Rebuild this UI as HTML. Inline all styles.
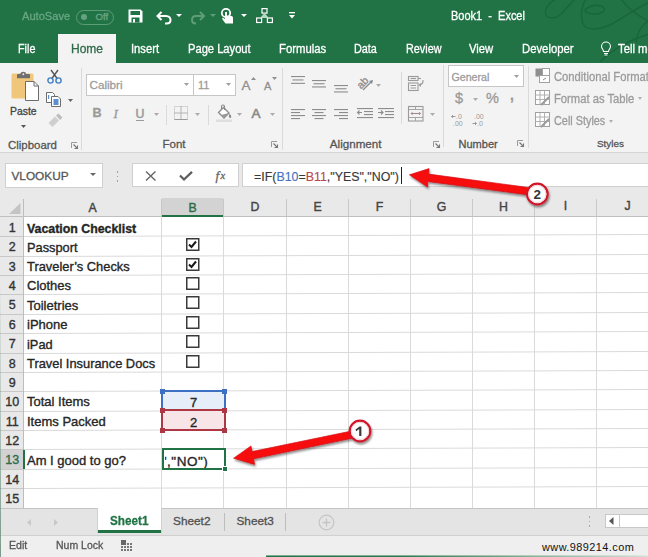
<!DOCTYPE html><html><head><meta charset='utf-8'><style>
*{margin:0;padding:0;box-sizing:border-box}
html,body{width:648px;height:557px;overflow:hidden;background:#fff;position:relative;font-family:"Liberation Sans",sans-serif}
.a{position:absolute}
.t{position:absolute;white-space:pre;line-height:1;-webkit-text-stroke-width:0.3px}
svg{position:absolute;overflow:visible}
</style></head><body>
<div class="a" style="left:0px;top:0px;width:648px;height:63px;background:#217346"></div>
<svg style="left:0;top:0" width="648" height="63"><g fill="none" stroke="#19663b" stroke-width="1.5">
<path d="M556 -1 C548 3 544 10 546 15 C548 19 556 19 561 14 C566 9 570 4 576 -2"/>
<path d="M586 -2 C582 6 580 16 583 24 C587 31 600 30 612 24 C625 17 636 8 650 2"/>
<path d="M585 10 C590 5 598 4 603 7 C607 10 602 14 595 14 C589 14 585 12 585 10 Z"/>
<path d="M620 -2 C626 6 634 14 650 22"/>
<path d="M636 42 C637 32 641 25 650 20"/>
<path d="M600 62 C612 50 628 40 650 34"/>
</g></svg>
<div class="t" style="left:21.5px;top:11.02px;font-size:11.8px;transform:scaleX(0.941);transform-origin:0 0;color:#6aa684">AutoSave</div>
<div class="a" style="left:76px;top:9.5px;width:37.5px;height:15px;border:1.7px solid #5d9c78;border-radius:7.5px"></div>
<div class="a" style="left:81.3px;top:14.2px;width:6px;height:6px;background:#66a281;border-radius:50%"></div>
<div class="t" style="left:95.5px;top:12.31px;font-size:9.6px;color:#6aa684">Off</div>
<svg style="left:128px;top:9px" width="16" height="15"><path d="M0.5 0.5 H12.5 L14.5 2.5 V13.5 H0.5 Z" fill="#fff"/><rect x="2.5" y="2" width="9.5" height="4" fill="#217346"/><rect x="3.5" y="8.5" width="8" height="5" fill="#217346"/><rect x="5" y="10" width="2" height="3.5" fill="#fff"/></svg>
<svg style="left:156px;top:9px" width="18" height="16"><path d="M5.5 3 L1.5 7 L5.5 11" fill="none" stroke="#fff" stroke-width="2"/><path d="M2 7 H10 C13 7 14.5 9 14.5 11 C14.5 13 13 14.5 10.5 14.5 H9" fill="none" stroke="#fff" stroke-width="2"/></svg>
<svg style="left:176px;top:14px" width="7" height="4"><path d="M0 0 H6 L3 3 Z" fill="#fff"/></svg>
<svg style="left:191px;top:9px" width="18" height="16"><path d="M9 3 L13 7 L9 11" fill="none" stroke="#5d9e79" stroke-width="2"/><path d="M12.5 7 H5 C2 7 1 9 1 11 C1 13 2.5 14.5 5 14.5" fill="none" stroke="#5d9e79" stroke-width="2"/></svg>
<svg style="left:210px;top:14px" width="7" height="4"><path d="M0 0 H6 L3 3 Z" fill="#5d9e79"/></svg>
<svg style="left:221px;top:8px" width="14" height="17"><circle cx="5" cy="5" r="4.2" fill="none" stroke="#fff" stroke-width="1.8"/><path d="M4 4 V11 L2.5 10 C1.5 9.5 0.8 10.5 1.5 11.5 L4.5 15.5 H12 V10 C12 8.5 11 8 9 7.8 L6 7.5 V4 Z" fill="#fff"/></svg>
<svg style="left:241px;top:14px" width="7" height="4"><path d="M0 0 H6 L3 3 Z" fill="#fff"/></svg>
<svg style="left:256px;top:8px" width="18" height="16"><g fill="none" stroke="#fff" stroke-width="1.2"><rect x="6" y="0.6" width="5" height="4.5"/><rect x="0.6" y="10" width="5" height="4.5"/><rect x="11.4" y="10" width="5" height="4.5"/></g><path d="M8.5 5 L4 10 H13 Z" fill="#b8d8c4"/></svg>
<svg style="left:289px;top:12px" width="7" height="8"><rect x="0" y="0" width="6" height="1.3" fill="#fff"/><path d="M0 3 H6 L3 6.5 Z" fill="#fff"/></svg>
<div class="t" style="left:451px;top:9.76px;font-size:12.2px;transform:scaleX(0.902);transform-origin:0 0;color:#fff">Book1  -  Excel</div>
<div class="a" style="left:58px;top:34px;width:58px;height:30px;background:#f3f3f3"></div>
<div class="t" style="left:18px;top:43px;font-size:12.3px;color:#fff;transform:scaleX(0.878);transform-origin:0 0">File</div>
<div class="t" style="left:71px;top:43px;font-size:12.3px;color:#2e6b4a;transform:scaleX(0.976);transform-origin:0 0">Home</div>
<div class="t" style="left:131px;top:43px;font-size:12.3px;color:#fff;transform:scaleX(0.911);transform-origin:0 0">Insert</div>
<div class="t" style="left:187.5px;top:43px;font-size:12.3px;color:#fff;transform:scaleX(0.907);transform-origin:0 0">Page Layout</div>
<div class="t" style="left:278.5px;top:43px;font-size:12.3px;color:#fff;transform:scaleX(0.921);transform-origin:0 0">Formulas</div>
<div class="t" style="left:354px;top:43px;font-size:12.3px;color:#fff;transform:scaleX(0.881);transform-origin:0 0">Data</div>
<div class="t" style="left:405.5px;top:43px;font-size:12.3px;color:#fff;transform:scaleX(0.880);transform-origin:0 0">Review</div>
<div class="t" style="left:469px;top:43px;font-size:12.3px;color:#fff;transform:scaleX(0.915);transform-origin:0 0">View</div>
<div class="t" style="left:522px;top:43px;font-size:12.3px;color:#fff;transform:scaleX(0.919);transform-origin:0 0">Developer</div>
<div class="t" style="left:618px;top:43px;font-size:12.3px;color:#fff;transform:scaleX(0.919);transform-origin:0 0">Tell me</div>
<svg style="left:600px;top:42px" width="12" height="14"><path d="M3.5 9.5 C3.5 7.5 1.5 6.5 1.5 4.5 A4.5 4.5 0 0 1 10.5 4.5 C10.5 6.5 8.5 7.5 8.5 9.5 Z" fill="none" stroke="#fff" stroke-width="1.1"/><path d="M4 11.5 H8 M4.5 13 H7.5" stroke="#fff" stroke-width="1.1"/></svg>
<div class="a" style="left:0px;top:63px;width:648px;height:90px;background:#f3f3f3"></div>
<div class="a" style="left:0px;top:152px;width:648px;height:1px;background:#d5d5d5"></div>
<div class="a" style="left:81px;top:68px;width:1px;height:82px;background:#dadada"></div>
<div class="a" style="left:282px;top:68px;width:1px;height:82px;background:#dadada"></div>
<div class="a" style="left:443px;top:65px;width:1px;height:82px;background:#dadada"></div>
<div class="a" style="left:528px;top:66px;width:1px;height:82px;background:#dadada"></div>
<svg style="left:10px;top:70px" width="32" height="32">
<rect x="1.5" y="3.5" width="22" height="25" rx="1.5" fill="#f0c77a"/>
<path d="M7 5 Q7 4 8 4 H19 Q20 4 20 5 V8.3 H7 Z" fill="#6f6f6f"/><path d="M10.5 5 V3.5 Q10.5 1.8 13.3 1.8 Q16 1.8 16 3.5 V5 Z" fill="#6f6f6f"/><circle cx="13.3" cy="4.2" r="1" fill="#e9e9e9"/>
<path d="M15.5 11.5 H24 L28.5 16 V30.5 H15.5 Z" fill="#fff" stroke="#6d6d6d" stroke-width="1"/>
<path d="M24 11.5 V16 H28.5" fill="none" stroke="#6d6d6d" stroke-width="1"/>
</svg>
<div class="t" style="left:10px;top:106.89px;font-size:10.4px;color:#444">Paste</div>
<svg style="left:21px;top:125px" width="5" height="3"><path d="M0 0 H5 L2.5 3 Z" fill="#555"/></svg>
<svg style="left:47px;top:69px" width="15" height="15"><path d="M4 1 L10.5 10 M11 1 L4.5 10" stroke="#505050" stroke-width="1.3" fill="none"/><circle cx="3.5" cy="11.5" r="2.6" fill="none" stroke="#3f7fc6" stroke-width="1.4"/><circle cx="11.5" cy="11.5" r="2.6" fill="none" stroke="#3f7fc6" stroke-width="1.4"/></svg>
<svg style="left:46px;top:92px" width="16" height="15"><path d="M0.5 0.5 H6.5 L8.5 2.5 V10.5 H0.5 Z" fill="#fff" stroke="#6d6d6d"/><path d="M5.5 4.5 H12 L14.5 7 V14.5 H5.5 Z" fill="#fff" stroke="#6d6d6d"/><rect x="7.5" y="7" width="5" height="6" fill="#5b8fd0"/><rect x="2" y="3" width="1.2" height="4" fill="#5b8fd0"/></svg>
<svg style="left:68px;top:99px" width="5" height="3"><path d="M0 0 H5 L2.5 3 Z" fill="#666"/></svg>
<svg style="left:48px;top:114px" width="15" height="13"><path d="M0.5 9 L7 2.5 L11 6.5 L4.5 13 Z" fill="#cfcfcf"/><path d="M8 1.5 L10.5 -0.5 L14.5 3.5 L12 6 Z" fill="#bdbdbd"/></svg>
<div class="t" style="left:8px;top:139.64px;font-size:11.45px;color:#555">Clipboard</div>
<svg style="left:71px;top:142px" width="7" height="7"><path d="M0.5 6 V0.5 H6" fill="none" stroke="#9a9a9a" stroke-width="1"/><path d="M2.5 2.5 L6.5 6.5 M3.5 6.5 H6.5 V3.5" fill="none" stroke="#777" stroke-width="1.1"/></svg>
<div class="a" style="left:86px;top:74px;width:108px;height:22px;background:#fff;border:1px solid #c6c6c6"></div>
<div class="a" style="left:193px;top:74px;width:43px;height:22px;background:#fff;border:1px solid #c6c6c6"></div>
<div class="t" style="left:89.5px;top:79.43px;font-size:11.68px;color:#9c9c9c">Calibri</div>
<svg style="left:184px;top:83px" width="5" height="3"><path d="M0 0 H5 L2.5 3 Z" fill="#a0a0a0"/></svg>
<div class="t" style="left:198px;top:80.05px;font-size:11px;color:#9c9c9c">11</div>
<svg style="left:226px;top:83px" width="5" height="3"><path d="M0 0 H5 L2.5 3 Z" fill="#a0a0a0"/></svg>
<div class="t" style="left:241.5px;top:78.78px;font-size:13.5px;color:#8f8f8f">A</div>
<svg style="left:251px;top:77px" width="5" height="3"><path d="M0 3 L2.5 0 L5 3 Z" fill="#8f8f8f"/></svg>
<div class="t" style="left:264px;top:81.05px;font-size:11px;color:#8f8f8f">A</div>
<svg style="left:272px;top:77px" width="5" height="3"><path d="M0 0 H5 L2.5 3 Z" fill="#8f8f8f"/></svg>
<div class="t" style="left:92.5px;top:107.40px;font-size:12.6px;color:#9a9a9a;font-weight:bold">B</div>
<div class="t" style="left:113.5px;top:107.03px;font-size:13px;color:#9a9a9a;font-style:italic;font-family:&quot;Liberation Serif&quot;">I</div>
<div class="t" style="left:135.5px;top:107.67px;font-size:12.3px;color:#9a9a9a;-webkit-text-stroke-width:0.5px">U</div>
<div class="a" style="left:135.5px;top:120px;width:8.5px;height:1.2px;background:#9a9a9a"></div>
<svg style="left:153.5px;top:113px" width="5" height="3"><path d="M0 0 H5 L2.5 3 Z" fill="#ababab"/></svg>
<div class="a" style="left:166px;top:105px;width:1px;height:20px;background:#dadada"></div>
<svg style="left:174px;top:106px" width="14" height="14"><rect x="0.5" y="0.5" width="13" height="13" fill="none" stroke="#b3b3b3" stroke-dasharray="1 1"/><path d="M7 0 V14 M0 7 H14" stroke="#b3b3b3"/><path d="M0.5 13.5 H13.5" stroke="#9a9a9a"/></svg>
<svg style="left:194.5px;top:113px" width="5" height="3"><path d="M0 0 H5 L2.5 3 Z" fill="#ababab"/></svg>
<div class="a" style="left:208px;top:105px;width:1px;height:20px;background:#dadada"></div>
<svg style="left:216px;top:105px" width="17" height="17"><path d="M2.5 7.5 L7.5 2.5 L13 8 L8 13 Z" fill="#fff" stroke="#8a8a8a" stroke-width="1.3"/><path d="M13 8 L8 13 L5 10 Z" fill="#9a9a9a"/><path d="M5.5 4.5 V1.5 Q5.5 0 7 0 Q8.5 0 8.5 1.5 V5" fill="none" stroke="#8a8a8a" stroke-width="1.1"/><path d="M13.5 8.5 Q15.8 11 15.2 12.5 Q14 13.5 13 12.3 Q12.7 11 13.5 8.5Z" fill="#8a8a8a"/><rect x="0" y="14.5" width="16" height="2.5" fill="#dedede"/></svg>
<svg style="left:237px;top:113px" width="5" height="3"><path d="M0 0 H5 L2.5 3 Z" fill="#ababab"/></svg>
<div class="t" style="left:251.5px;top:107.28px;font-size:13.5px;color:#8a8a8a;-webkit-text-stroke-width:0.6px">A</div>
<svg style="left:269.5px;top:113px" width="5" height="3"><path d="M0 0 H5 L2.5 3 Z" fill="#ababab"/></svg>
<div class="t" style="left:162.5px;top:138.86px;font-size:11.54px;color:#555">Font</div>
<svg style="left:271px;top:141px" width="7" height="7"><path d="M0.5 6 V0.5 H6" fill="none" stroke="#9a9a9a" stroke-width="1"/><path d="M2.5 2.5 L6.5 6.5 M3.5 6.5 H6.5 V3.5" fill="none" stroke="#777" stroke-width="1.1"/></svg>
<svg style="left:291px;top:76px" width="16" height="16"><rect x="0" y="0.0" width="14" height="1.1" fill="#8d8d8d"/><rect x="1.5" y="3.4" width="11" height="1.1" fill="#8d8d8d"/><rect x="0" y="6.8" width="14" height="1.1" fill="#8d8d8d"/></svg>
<svg style="left:312px;top:80px" width="16" height="16"><rect x="0" y="0.0" width="14" height="1.1" fill="#8d8d8d"/><rect x="1.5" y="3.2" width="11" height="1.1" fill="#8d8d8d"/><rect x="0" y="6.4" width="14" height="1.1" fill="#8d8d8d"/></svg>
<svg style="left:334px;top:85px" width="16" height="16"><rect x="0" y="0.0" width="14" height="1.1" fill="#8d8d8d"/><rect x="1.5" y="3.2" width="11" height="1.1" fill="#8d8d8d"/><rect x="0" y="6.4" width="14" height="1.1" fill="#8d8d8d"/></svg>
<svg style="left:355px;top:74px" width="20" height="18"><text x="1" y="12.5" font-family="Liberation Sans" font-size="10.5" fill="#8a8a8a" stroke="#8a8a8a" stroke-width="0.3" transform="rotate(-45 7 8)">ab</text><path d="M8 16 L17 7" fill="none" stroke="#8a8a8a" stroke-width="1.3"/><path d="M18 6 L14 7 L17 10 Z" fill="#8a8a8a"/></svg>
<svg style="left:376px;top:84px" width="5" height="3"><path d="M0 0 H5 L2.5 3 Z" fill="#ababab"/></svg>
<svg style="left:408px;top:76px" width="17" height="16"><g fill="none" stroke="#9a9a9a" stroke-width="1.1"><rect x="0.5" y="0.5" width="9.5" height="4"/><path d="M2.5 2.5 H8"/><path d="M10 2.5 H13"/><rect x="0.5" y="7" width="9.5" height="7.5"/><path d="M2.5 9.5 H8 M2.5 12 H8"/><path d="M15 4 Q15.5 8 11.5 9"/></g><path d="M10.5 9 L13 7 L13 11 Z" fill="#9a9a9a"/></svg>
<svg style="left:291px;top:108.5px" width="16" height="16"><rect x="0" y="0" width="14" height="1.1" fill="#8d8d8d"/><rect x="0" y="3" width="9" height="1.1" fill="#8d8d8d"/><rect x="0" y="6" width="14" height="1.1" fill="#8d8d8d"/><rect x="0" y="9" width="9" height="1.1" fill="#8d8d8d"/></svg>
<svg style="left:312px;top:108.5px" width="16" height="16"><rect x="0" y="0" width="14" height="1.1" fill="#8d8d8d"/><rect x="2.5" y="3" width="9" height="1.1" fill="#8d8d8d"/><rect x="0" y="6" width="14" height="1.1" fill="#8d8d8d"/><rect x="2.5" y="9" width="9" height="1.1" fill="#8d8d8d"/></svg>
<svg style="left:333.5px;top:108.5px" width="16" height="16"><rect x="0" y="0" width="14" height="1.1" fill="#8d8d8d"/><rect x="5" y="3" width="9" height="1.1" fill="#8d8d8d"/><rect x="0" y="6" width="14" height="1.1" fill="#8d8d8d"/><rect x="5" y="9" width="9" height="1.1" fill="#8d8d8d"/></svg>
<svg style="left:357px;top:108px" width="16" height="12"><g fill="#8d8d8d"><rect x="0" y="0" width="16" height="1.1"/><rect x="7" y="3" width="9" height="1.1"/><rect x="7" y="6" width="9" height="1.1"/><rect x="0" y="9" width="16" height="1.1"/></g><path d="M5 4.5 H0.5 M2.5 2.5 L0.5 4.5 L2.5 6.5" fill="none" stroke="#8d8d8d" stroke-width="1.1"/></svg>
<svg style="left:378px;top:108px" width="16" height="12"><g fill="#8d8d8d"><rect x="0" y="0" width="16" height="1.1"/><rect x="7" y="3" width="9" height="1.1"/><rect x="7" y="6" width="9" height="1.1"/><rect x="0" y="9" width="16" height="1.1"/></g><path d="M0 4.5 H5 M3 2.5 L5 4.5 L3 6.5" fill="none" stroke="#8d8d8d" stroke-width="1.1"/></svg>
<div class="a" style="left:401px;top:72px;width:1px;height:52px;background:#dadada"></div>
<svg style="left:408px;top:106px" width="17" height="16"><rect x="0.5" y="0.5" width="14.5" height="14.5" fill="none" stroke="#9a9a9a" stroke-width="1.1"/><path d="M0.5 3.5 H15 M0.5 11.5 H15 M7.5 0.5 V3.5 M7.5 11.5 V15" fill="none" stroke="#a5a5a5"/><path d="M3 7.5 H12.5" stroke="#a08c8c" stroke-width="1.1"/><path d="M2.5 7.5 L4.5 5.8 V9.2 Z M13 7.5 L11 5.8 V9.2 Z" fill="#a08c8c"/></svg>
<svg style="left:430px;top:113px" width="5" height="3"><path d="M0 0 H5 L2.5 3 Z" fill="#ababab"/></svg>
<div class="t" style="left:329.8px;top:138.27px;font-size:11.63px;color:#555">Alignment</div>
<svg style="left:433px;top:141px" width="7" height="7"><path d="M0.5 6 V0.5 H6" fill="none" stroke="#9a9a9a" stroke-width="1"/><path d="M2.5 2.5 L6.5 6.5 M3.5 6.5 H6.5 V3.5" fill="none" stroke="#777" stroke-width="1.1"/></svg>
<div class="a" style="left:448px;top:65px;width:76px;height:22px;background:#fff;border:1px solid #c6c6c6"></div>
<div class="t" style="left:451.5px;top:72.36px;font-size:10.65px;color:#9c9c9c">General</div>
<svg style="left:514px;top:75px" width="5" height="3"><path d="M0 0 H5 L2.5 3 Z" fill="#a0a0a0"/></svg>
<div class="t" style="left:455px;top:90.88px;font-size:14.5px;color:#9a9a9a">$</div>
<svg style="left:472.5px;top:98px" width="5" height="3"><path d="M0 0 H5 L2.5 3 Z" fill="#ababab"/></svg>
<div class="t" style="left:486px;top:90.88px;font-size:14.5px;color:#9a9a9a">%</div>
<div class="t" style="left:510px;top:88.33px;font-size:14px;color:#9a9a9a;font-weight:bold">,</div>
<svg style="left:451px;top:113px" width="16" height="15"><text x="5" y="6" font-family="Liberation Sans" font-size="7" fill="#9a9a9a">.0</text><text x="2" y="13" font-family="Liberation Sans" font-size="7" fill="#9a9a9a">.00</text><path d="M4.5 3.5 H0.5 M2 2 L0.5 3.5 L2 5" fill="none" stroke="#9a9a9a"/></svg>
<svg style="left:472px;top:113px" width="16" height="15"><text x="2" y="6" font-family="Liberation Sans" font-size="7" fill="#9a9a9a">.00</text><text x="5" y="13" font-family="Liberation Sans" font-size="7" fill="#9a9a9a">.0</text><path d="M0.5 10.5 H4.5 M3 9 L4.5 10.5 L3 12" fill="none" stroke="#9a9a9a"/></svg>
<div class="t" style="left:458.5px;top:138.60px;font-size:11.05px;color:#555">Number</div>
<svg style="left:517px;top:140px" width="7" height="7"><path d="M0.5 6 V0.5 H6" fill="none" stroke="#9a9a9a" stroke-width="1"/><path d="M2.5 2.5 L6.5 6.5 M3.5 6.5 H6.5 V3.5" fill="none" stroke="#777" stroke-width="1.1"/></svg>
<svg style="left:535px;top:68px" width="16" height="16"><rect x="0.5" y="0.5" width="7" height="8" fill="#8f8f8f"/><rect x="7.5" y="0.5" width="7" height="8" fill="#fff" stroke="#a0a0a0"/><rect x="4.5" y="7.5" width="10" height="7" fill="#fff" stroke="#a0a0a0"/><path d="M8 12 L11 10" stroke="#8a8a8a"/></svg>
<svg style="left:535px;top:90px" width="16" height="16"><rect x="0.5" y="0.5" width="14" height="14" fill="#fff" stroke="#a0a0a0"/><path d="M0.5 5 H14.5 M0.5 9.5 H14.5 M5 0.5 V14.5 M9.5 0.5 V14.5" stroke="#b0b0b0"/><path d="M6 15 L14 7" stroke="#9a9a9a" stroke-width="2"/></svg>
<svg style="left:535px;top:112px" width="16" height="16"><rect x="0.5" y="0.5" width="14" height="14" fill="#fff" stroke="#a0a0a0"/><path d="M0.5 5 H14.5 M0.5 9.5 H14.5 M5 0.5 V14.5 M9.5 0.5 V14.5" stroke="#b0b0b0"/><path d="M6 15 L14 7" stroke="#9a9a9a" stroke-width="2"/></svg>
<div class="t" style="left:554.4px;top:70.57px;font-size:12.3px;transform:scaleX(0.913);transform-origin:0 0;color:#9b9b9b">Conditional Formatting</div>
<div class="t" style="left:554.4px;top:92.77px;font-size:12.3px;transform:scaleX(0.913);transform-origin:0 0;color:#9b9b9b">Format as Table</div>
<svg style="left:638px;top:97px" width="4" height="3"><path d="M0 0 H4 L2.0 3 Z" fill="#b0b0b0"/></svg>
<div class="t" style="left:554.4px;top:115.34px;font-size:12.0px;transform:scaleX(0.905);transform-origin:0 0;color:#9b9b9b">Cell Styles</div>
<svg style="left:608.5px;top:119.5px" width="4" height="3"><path d="M0 0 H4 L2.0 3 Z" fill="#b0b0b0"/></svg>
<div class="t" style="left:597px;top:139.04px;font-size:9.9px;color:#555">Styles</div>
<div class="a" style="left:0px;top:153px;width:648px;height:64px;background:#e9e9e9"></div>
<div class="a" style="left:5px;top:163px;width:98px;height:25px;background:#fff;border:1px solid #d0d0d0"></div>
<div class="t" style="left:11.5px;top:170.82px;font-size:11.8px;color:#555">VLOOKUP</div>
<svg style="left:90px;top:173px" width="6" height="3"><path d="M0 0 H6 L3.0 3 Z" fill="#666"/></svg>
<div class="a" style="left:116.5px;top:171px;width:1.5px;height:1.5px;background:#a0a0a0"></div>
<div class="a" style="left:116.5px;top:175.5px;width:1.5px;height:1.5px;background:#a0a0a0"></div>
<div class="a" style="left:116.5px;top:180px;width:1.5px;height:1.5px;background:#a0a0a0"></div>
<div class="a" style="left:132px;top:163px;width:107px;height:24px;background:#fff;border:1px solid #d0d0d0"></div>
<svg style="left:145px;top:171px" width="12" height="10"><path d="M1 0.5 L10.5 9.5 M10.5 0.5 L1 9.5" stroke="#666" stroke-width="1.4"/></svg>
<svg style="left:179px;top:171px" width="14" height="10"><path d="M1 4.5 L5 8.5 L13 0.8" fill="none" stroke="#5f5f5f" stroke-width="2.3"/></svg>
<div class="t" style="left:215.5px;top:168.74px;font-size:13px;color:#666;font-family:&quot;Liberation Serif&quot;"><i>f</i></div>
<div class="t" style="left:220.5px;top:171.00px;font-size:10.5px;color:#666;font-family:&quot;Liberation Serif&quot;"><i>x</i></div>
<div class="a" style="left:242px;top:163px;width:410px;height:24px;background:#fff;border:1px solid #d0d0d0"></div>
<div class="t" style="left:254px;top:170.78px;font-size:12.4px;color:#383838;-webkit-text-stroke-width:0.15px">=IF(<span style="color:#4572bd">B10</span>=<span style="color:#b9474d">B11</span>,"YES","NO")</div>
<div class="a" style="left:401px;top:167px;width:1.3px;height:17px;background:#222"></div>
<div class="a" style="left:0px;top:198px;width:648px;height:19px;background:#e9e9e9"></div>
<div class="a" style="left:0px;top:217px;width:23px;height:292px;background:#e9e9e9"></div>
<svg style="left:9px;top:203px" width="12" height="11"><path d="M11.5 0 V11 H0 Z" fill="#c4c4c4"/></svg>
<div class="a" style="left:161px;top:217px;width:1px;height:292px;background:#dadada"></div>
<div class="a" style="left:223px;top:217px;width:1px;height:292px;background:#dadada"></div>
<div class="a" style="left:286px;top:217px;width:1px;height:292px;background:#dadada"></div>
<div class="a" style="left:348px;top:217px;width:1px;height:292px;background:#dadada"></div>
<div class="a" style="left:410px;top:217px;width:1px;height:292px;background:#dadada"></div>
<div class="a" style="left:472px;top:217px;width:1px;height:292px;background:#dadada"></div>
<div class="a" style="left:534px;top:217px;width:1px;height:292px;background:#dadada"></div>
<div class="a" style="left:596px;top:217px;width:1px;height:292px;background:#dadada"></div>
<svg style="left:0;top:0" width="648" height="557"><g stroke="#dadada" stroke-width="1.1"><line x1="23" y1="236.56" x2="648" y2="234.49"/><line x1="23" y1="256.56" x2="648" y2="254.49"/><line x1="23" y1="275.56" x2="648" y2="273.49"/><line x1="23" y1="294.56" x2="648" y2="292.49"/><line x1="23" y1="314.56" x2="648" y2="312.49"/><line x1="23" y1="333.56" x2="648" y2="331.49"/><line x1="23" y1="353.56" x2="648" y2="351.49"/><line x1="23" y1="372.56" x2="648" y2="370.49"/><line x1="23" y1="391.56" x2="648" y2="389.49"/><line x1="23" y1="411.56" x2="648" y2="409.49"/><line x1="23" y1="430.56" x2="648" y2="428.49"/><line x1="23" y1="449.56" x2="648" y2="447.49"/><line x1="23" y1="469.56" x2="648" y2="467.49"/><line x1="23" y1="488.56" x2="648" y2="486.49"/></g></svg>
<div class="a" style="left:0px;top:236px;width:23px;height:1px;background:#c8c8c8"></div>
<div class="a" style="left:0px;top:256px;width:23px;height:1px;background:#c8c8c8"></div>
<div class="a" style="left:0px;top:275px;width:23px;height:1px;background:#c8c8c8"></div>
<div class="a" style="left:0px;top:294px;width:23px;height:1px;background:#c8c8c8"></div>
<div class="a" style="left:0px;top:314px;width:23px;height:1px;background:#c8c8c8"></div>
<div class="a" style="left:0px;top:333px;width:23px;height:1px;background:#c8c8c8"></div>
<div class="a" style="left:0px;top:353px;width:23px;height:1px;background:#c8c8c8"></div>
<div class="a" style="left:0px;top:372px;width:23px;height:1px;background:#c8c8c8"></div>
<div class="a" style="left:0px;top:391px;width:23px;height:1px;background:#c8c8c8"></div>
<div class="a" style="left:0px;top:411px;width:23px;height:1px;background:#c8c8c8"></div>
<div class="a" style="left:0px;top:430px;width:23px;height:1px;background:#c8c8c8"></div>
<div class="a" style="left:0px;top:449px;width:23px;height:1px;background:#c8c8c8"></div>
<div class="a" style="left:0px;top:469px;width:23px;height:1px;background:#c8c8c8"></div>
<div class="a" style="left:0px;top:488px;width:23px;height:1px;background:#c8c8c8"></div>
<div class="a" style="left:0px;top:508px;width:23px;height:1px;background:#c8c8c8"></div>
<div class="a" style="left:161px;top:199px;width:1px;height:18px;background:#c8c8c8"></div>
<div class="a" style="left:223px;top:199px;width:1px;height:18px;background:#c8c8c8"></div>
<div class="a" style="left:286px;top:199px;width:1px;height:18px;background:#c8c8c8"></div>
<div class="a" style="left:348px;top:199px;width:1px;height:18px;background:#c8c8c8"></div>
<div class="a" style="left:410px;top:199px;width:1px;height:18px;background:#c8c8c8"></div>
<div class="a" style="left:472px;top:199px;width:1px;height:18px;background:#c8c8c8"></div>
<div class="a" style="left:534px;top:199px;width:1px;height:18px;background:#c8c8c8"></div>
<div class="a" style="left:596px;top:199px;width:1px;height:18px;background:#c8c8c8"></div>
<div class="a" style="left:23px;top:199px;width:1px;height:310px;background:#bdbdbd"></div>
<div class="a" style="left:0px;top:216px;width:648px;height:1px;background:#c0c0c0"></div>
<div class="a" style="left:162px;top:198px;width:61px;height:18px;background:#d3d3d3"></div>
<div class="a" style="left:162px;top:215px;width:61px;height:2px;background:#217346"></div>
<div class="a" style="left:0px;top:450px;width:23px;height:19px;background:#d2d2d2"></div>
<div class="a" style="left:23px;top:450px;width:2px;height:19px;background:#217346"></div>
<div class="t" style="left:82.5px;width:20px;text-align:center;top:201.98px;font-size:12.3px;color:#444;-webkit-text-stroke:0.4px #444">A</div>
<div class="t" style="left:182.5px;width:20px;text-align:center;top:201.65px;font-size:12.3px;color:#2e6b4a;-webkit-text-stroke:0.4px #2e6b4a">B</div>
<div class="t" style="left:245.0px;width:20px;text-align:center;top:201.44px;font-size:12.3px;color:#444;-webkit-text-stroke:0.4px #444">D</div>
<div class="t" style="left:307.5px;width:20px;text-align:center;top:201.24px;font-size:12.3px;color:#444;-webkit-text-stroke:0.4px #444">E</div>
<div class="t" style="left:369.5px;width:20px;text-align:center;top:201.03px;font-size:12.3px;color:#444;-webkit-text-stroke:0.4px #444">F</div>
<div class="t" style="left:431.5px;width:20px;text-align:center;top:200.83px;font-size:12.3px;color:#444;-webkit-text-stroke:0.4px #444">G</div>
<div class="t" style="left:493.5px;width:20px;text-align:center;top:200.62px;font-size:12.3px;color:#444;-webkit-text-stroke:0.4px #444">H</div>
<div class="t" style="left:555.5px;width:20px;text-align:center;top:200.42px;font-size:12.3px;color:#444;-webkit-text-stroke:0.4px #444">I</div>
<div class="t" style="left:617.5px;width:20px;text-align:center;top:200.21px;font-size:12.3px;color:#444;-webkit-text-stroke:0.4px #444">J</div>
<div class="t" style="left:0.8px;width:23px;text-align:center;top:222.19px;font-size:12.5px;color:#333;-webkit-text-stroke:0.35px #333">1</div>
<div class="t" style="left:0.8px;width:23px;text-align:center;top:241.19px;font-size:12.5px;color:#333;-webkit-text-stroke:0.35px #333">2</div>
<div class="t" style="left:0.8px;width:23px;text-align:center;top:261.19px;font-size:12.5px;color:#333;-webkit-text-stroke:0.35px #333">3</div>
<div class="t" style="left:0.8px;width:23px;text-align:center;top:280.19px;font-size:12.5px;color:#333;-webkit-text-stroke:0.35px #333">4</div>
<div class="t" style="left:0.8px;width:23px;text-align:center;top:299.19px;font-size:12.5px;color:#333;-webkit-text-stroke:0.35px #333">5</div>
<div class="t" style="left:0.8px;width:23px;text-align:center;top:319.19px;font-size:12.5px;color:#333;-webkit-text-stroke:0.35px #333">6</div>
<div class="t" style="left:0.8px;width:23px;text-align:center;top:338.19px;font-size:12.5px;color:#333;-webkit-text-stroke:0.35px #333">7</div>
<div class="t" style="left:0.8px;width:23px;text-align:center;top:358.19px;font-size:12.5px;color:#333;-webkit-text-stroke:0.35px #333">8</div>
<div class="t" style="left:0.8px;width:23px;text-align:center;top:377.19px;font-size:12.5px;color:#333;-webkit-text-stroke:0.35px #333">9</div>
<div class="t" style="left:0.8px;width:23px;text-align:center;top:396.19px;font-size:12.5px;color:#333;-webkit-text-stroke:0.35px #333">10</div>
<div class="t" style="left:0.8px;width:23px;text-align:center;top:416.19px;font-size:12.5px;color:#333;-webkit-text-stroke:0.35px #333">11</div>
<div class="t" style="left:0.8px;width:23px;text-align:center;top:435.19px;font-size:12.5px;color:#333;-webkit-text-stroke:0.35px #333">12</div>
<div class="t" style="left:0.8px;width:23px;text-align:center;top:454.19px;font-size:12.5px;color:#2e6b4a;-webkit-text-stroke:0.35px #2e6b4a">13</div>
<div class="t" style="left:0.8px;width:23px;text-align:center;top:474.19px;font-size:12.5px;color:#333;-webkit-text-stroke:0.35px #333">14</div>
<div class="t" style="left:0.8px;width:23px;text-align:center;top:493.19px;font-size:12.5px;color:#333;-webkit-text-stroke:0.35px #333">15</div>
<div class="t" style="left:27px;top:222.51px;font-size:12.36px;color:#262626;font-weight:bold;-webkit-text-stroke:0.35px #262626">Vacation Checklist</div>
<div class="t" style="left:27px;top:241.72px;font-size:12.8px;color:#262626;;-webkit-text-stroke:0.35px #262626">Passport</div>
<div class="t" style="left:27px;top:260.96px;font-size:12.86px;color:#262626;;-webkit-text-stroke:0.35px #262626">Traveler&#8217;s Checks</div>
<div class="t" style="left:27px;top:279.04px;font-size:13.0px;color:#262626;;-webkit-text-stroke:0.35px #262626">Clothes</div>
<div class="t" style="left:27px;top:298.94px;font-size:13.0px;color:#262626;;-webkit-text-stroke:0.35px #262626">Toiletries</div>
<div class="t" style="left:27px;top:318.04px;font-size:13.0px;color:#262626;;-webkit-text-stroke:0.35px #262626">iPhone</div>
<div class="t" style="left:27px;top:338.52px;font-size:12.8px;color:#262626;;-webkit-text-stroke:0.35px #262626">iPad</div>
<div class="t" style="left:27px;top:357.76px;font-size:12.86px;color:#262626;;-webkit-text-stroke:0.35px #262626">Travel Insurance Docs</div>
<div class="t" style="left:27px;top:395.24px;font-size:13.0px;color:#262626;;-webkit-text-stroke:0.35px #262626">Total Items</div>
<div class="t" style="left:27px;top:415.04px;font-size:13.0px;color:#262626;;-webkit-text-stroke:0.35px #262626">Items Packed</div>
<div class="t" style="left:27px;top:453.84px;font-size:13.0px;color:#262626;;-webkit-text-stroke:0.35px #262626">Am I good to go?</div>
<svg style="left:186px;top:238px" width="14" height="13"><rect x="0.75" y="0.75" width="12" height="11.5" fill="#fff" stroke="#3a3a3a" stroke-width="1.5"/><path d="M3 6.5 L5.5 9 L10 3.5" fill="none" stroke="#1a1a1a" stroke-width="2"/></svg>
<svg style="left:186px;top:258px" width="14" height="13"><rect x="0.75" y="0.75" width="12" height="11.5" fill="#fff" stroke="#3a3a3a" stroke-width="1.5"/><path d="M3 6.5 L5.5 9 L10 3.5" fill="none" stroke="#1a1a1a" stroke-width="2"/></svg>
<svg style="left:186px;top:277px" width="14" height="13"><rect x="0.75" y="0.75" width="12" height="11.5" fill="#fff" stroke="#3a3a3a" stroke-width="1.5"/></svg>
<svg style="left:186px;top:296px" width="14" height="13"><rect x="0.75" y="0.75" width="12" height="11.5" fill="#fff" stroke="#3a3a3a" stroke-width="1.5"/></svg>
<svg style="left:186px;top:316px" width="14" height="13"><rect x="0.75" y="0.75" width="12" height="11.5" fill="#fff" stroke="#3a3a3a" stroke-width="1.5"/></svg>
<svg style="left:186px;top:335px" width="14" height="13"><rect x="0.75" y="0.75" width="12" height="11.5" fill="#fff" stroke="#3a3a3a" stroke-width="1.5"/></svg>
<svg style="left:186px;top:355px" width="14" height="13"><rect x="0.75" y="0.75" width="12" height="11.5" fill="#fff" stroke="#3a3a3a" stroke-width="1.5"/></svg>
<div class="a" style="left:163px;top:392px;width:61px;height:18px;background:#e6eef9"></div>
<div class="a" style="left:163px;top:411px;width:61px;height:18px;background:#f8e5e7"></div>
<div class="a" style="left:162px;top:390px;width:63px;height:2px;background:#3d6fc2"></div>
<div class="a" style="left:162px;top:409px;width:63px;height:2px;background:#ad3745"></div>
<div class="a" style="left:162px;top:429px;width:63px;height:2px;background:#ad3745"></div>
<div class="a" style="left:161px;top:392px;width:2px;height:17px;background:#3d6fc2"></div>
<div class="a" style="left:224px;top:392px;width:2px;height:17px;background:#3d6fc2"></div>
<div class="a" style="left:161px;top:411px;width:2px;height:18px;background:#ad3745"></div>
<div class="a" style="left:224px;top:411px;width:2px;height:18px;background:#ad3745"></div>
<div class="a" style="left:160px;top:388.5px;width:5px;height:5px;background:#3d6fc2"></div>
<div class="a" style="left:222px;top:388.5px;width:5px;height:5px;background:#3d6fc2"></div>
<div class="a" style="left:160px;top:408px;width:5px;height:5px;background:#ad3745"></div>
<div class="a" style="left:222px;top:408px;width:5px;height:5px;background:#ad3745"></div>
<div class="a" style="left:160px;top:427.5px;width:5px;height:5px;background:#ad3745"></div>
<div class="a" style="left:222px;top:427.5px;width:5px;height:5px;background:#ad3745"></div>
<div class="t" style="left:190px;top:396.04px;font-size:13px;color:#262626;-webkit-text-stroke:0.35px #262626">7</div>
<div class="t" style="left:190px;top:415.54px;font-size:13px;color:#262626;-webkit-text-stroke:0.35px #262626">2</div>
<div class="a" style="left:162px;top:448px;width:64px;height:22px;border:2px solid #217346;background:#fff"></div>
<div class="a" style="left:222px;top:465.5px;width:6px;height:6px;background:#217346;border:1px solid #fff"></div>
<div class="a" style="left:165px;top:450px;width:58px;height:18px;overflow:hidden"><div class="t" style="left:-3.2px;top:4.58px;font-size:13.5px;letter-spacing:0.5px;color:#262626;-webkit-text-stroke:0.35px #262626">&quot;,&quot;NO&quot;)</div></div>
<div class="a" style="left:0px;top:509px;width:648px;height:27px;background:#e4e4e4"></div>
<div class="a" style="left:0px;top:508px;width:648px;height:1px;background:#c4c4c4"></div>
<div class="a" style="left:0px;top:535px;width:648px;height:1px;background:#d0d0d0"></div>
<svg style="left:27px;top:519px" width="5" height="7"><path d="M4 0 V7 L0 3.5 Z" fill="#c8c8c8"/></svg>
<svg style="left:54px;top:519px" width="5" height="7"><path d="M0 0 V7 L4 3.5 Z" fill="#c8c8c8"/></svg>
<div class="a" style="left:97px;top:508px;width:65px;height:25px;background:#fff;border-left:1px solid #d0d0d0;border-right:1px solid #d0d0d0"></div>
<div class="a" style="left:98px;top:530px;width:63px;height:2.5px;background:#217346"></div>
<div class="t" style="left:109.5px;top:514.44px;font-size:13px;transform:scaleX(0.903);transform-origin:0 0;color:#217346;font-weight:bold">Sheet1</div>
<div class="t" style="left:173px;top:516.09px;font-size:11.83px;color:#505050">Sheet2</div>
<div class="a" style="left:224px;top:513px;width:1px;height:18px;background:#bdbdbd"></div>
<div class="t" style="left:236.5px;top:515.35px;font-size:11.77px;color:#505050">Sheet3</div>
<div class="a" style="left:285px;top:513px;width:1px;height:18px;background:#bdbdbd"></div>
<svg style="left:318px;top:514px" width="17" height="17"><circle cx="8.5" cy="8.5" r="7.3" fill="none" stroke="#c5c5c5" stroke-width="1.2"/><path d="M8.5 4.5 V12.5 M4.5 8.5 H12.5" stroke="#c5c5c5" stroke-width="1.3"/></svg>
<div class="a" style="left:588.5px;top:516px;width:1.5px;height:1.5px;background:#a8a8a8"></div>
<div class="a" style="left:588.5px;top:520.5px;width:1.5px;height:1.5px;background:#a8a8a8"></div>
<div class="a" style="left:588.5px;top:525px;width:1.5px;height:1.5px;background:#a8a8a8"></div>
<div class="a" style="left:605px;top:514px;width:15px;height:14px;background:#fff;border:1px solid #c8c8c8"></div>
<svg style="left:609px;top:517px" width="5" height="8"><path d="M4.5 0 V8 L0 4 Z" fill="#555"/></svg>
<div class="a" style="left:620px;top:514px;width:28px;height:14px;background:#fff;border-top:1px solid #c8c8c8;border-bottom:1px solid #c8c8c8"></div>
<div class="a" style="left:0px;top:536px;width:648px;height:21px;background:#efefef"></div>
<div class="t" style="left:8.5px;top:539.72px;font-size:11.8px;transform:scaleX(0.898);transform-origin:0 0;color:#555">Edit</div>
<div class="t" style="left:56px;top:539.72px;font-size:11.8px;transform:scaleX(0.890);transform-origin:0 0;color:#555">Num Lock</div>
<svg style="left:121px;top:540px" width="13" height="12"><rect x="0" y="0" width="5" height="5" fill="#666"/><g fill="#777"><rect x="0" y="6" width="2" height="2"/><rect x="3" y="6" width="2" height="2"/><rect x="6" y="3" width="2" height="2"/><rect x="9" y="3" width="2" height="2"/><rect x="6" y="6" width="2" height="2"/><rect x="9" y="6" width="2" height="2"/><rect x="0" y="9" width="2" height="2"/><rect x="3" y="9" width="2" height="2"/><rect x="6" y="9" width="2" height="2"/><rect x="9" y="9" width="2" height="2"/></g></svg>
<div class="t" style="left:542px;top:541.94px;font-size:10.9px;color:#111;letter-spacing:0.45px;-webkit-text-stroke-width:0">www.989214.com</div>
<div class="a" style="left:266px;top:555px;width:382px;height:2px;background:linear-gradient(to right,#217346 0%,#2a7a4e 35%,#8db49c 72%,#d3ded7 100%)"></div>
<div class="a" style="left:266px;top:555px;width:382px;height:1px;background:rgba(241,241,241,0.45)"></div>
<svg style="left:0;top:0" width="648" height="557"><defs><filter id="sh2" x="-20%" y="-20%" width="140%" height="140%"><feGaussianBlur in="SourceAlpha" stdDeviation="1.2"/><feOffset dx="1" dy="1.5"/><feComponentTransfer><feFuncA type="linear" slope="0.45"/></feComponentTransfer><feMerge><feMergeNode/><feMergeNode in="SourceGraphic"/></feMerge></filter></defs>
<g filter="url(#sh2)"><path d="M409.4 174.8 L427.5 187.0 L427.7 181.5 L536.5 195.9 L537.5 188.7 L428.8 174.1 L429.0 168.6 Z" fill="#f60a0e" stroke="#d0080c" stroke-width="0.6" stroke-linejoin="round"/>
<circle cx="537.3" cy="194" r="10.3" fill="#fff" stroke="#d0182a" stroke-width="2.2"/></g>
<circle cx="537.3" cy="194" r="8.6" fill="none" stroke="#f6d3d6" stroke-width="1"/>
<text x="537.3" y="198.6" text-anchor="middle" font-family="Liberation Sans" font-weight="bold" font-size="13.5" fill="#333">2</text></svg>
<svg style="left:0;top:0" width="648" height="557"><defs><filter id="sh1" x="-20%" y="-20%" width="140%" height="140%"><feGaussianBlur in="SourceAlpha" stdDeviation="1.2"/><feOffset dx="1" dy="1.5"/><feComponentTransfer><feFuncA type="linear" slope="0.45"/></feComponentTransfer><feMerge><feMergeNode/><feMergeNode in="SourceGraphic"/></feMerge></filter></defs>
<g filter="url(#sh1)"><path d="M233.6 458.2 L254.6 464.4 L253.5 458.8 L360.2 436.5 L358.8 429.5 L252.1 451.5 L251.0 445.9 Z" fill="#f60a0e" stroke="#d0080c" stroke-width="0.6" stroke-linejoin="round"/>
<circle cx="360.0" cy="431" r="10.3" fill="#fff" stroke="#d0182a" stroke-width="2.2"/></g>
<circle cx="360.0" cy="431" r="8.6" fill="none" stroke="#f6d3d6" stroke-width="1"/>
<path d="M355.5 429.5 L359.7 426.4 H361.4 V435.9 H359.2 V429.1 L356.2 431.2 Z" fill="#3a3a3a"/></svg>
<div class="a" style="left:0px;top:280px;width:1px;height:277px;background:linear-gradient(to bottom,rgba(110,150,130,0),rgba(110,150,130,0.35) 40%,rgba(100,140,120,0.85))"></div>
</body></html>
